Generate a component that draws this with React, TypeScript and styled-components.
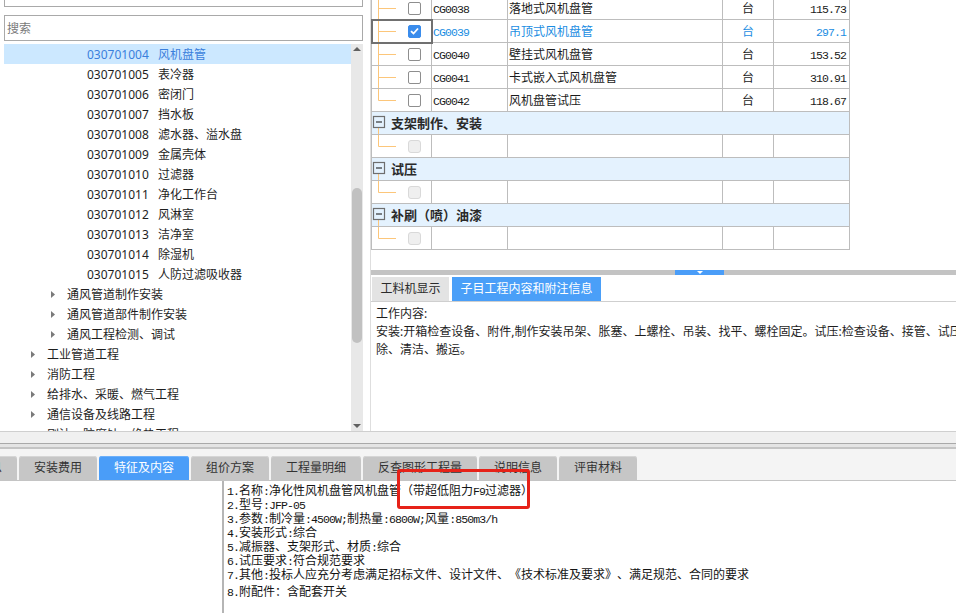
import React from "react";
import styled, { createGlobalStyle } from "styled-components";

const GlobalStyle = createGlobalStyle`
  html, body { margin: 0; padding: 0; background: #ffffff; }
  body {
    font-family: "Noto Sans", "Noto Sans CJK SC", sans-serif;
    font-size: 12px;
    color: #222;
    text-spacing-trim: space-all;
  }
  *, *::before, *::after { box-sizing: border-box; }
`;

const Page = styled.div`
  position: relative;
  width: 956px;
  height: 613px;
  overflow: hidden;
  display: flex;
  flex-direction: column;
  background: #fff;
`;

const TopArea = styled.div`
  display: flex;
  height: 431px;
  flex-shrink: 0;
  overflow: hidden;
`;

/* ---------- left tree pane ---------- */
const LeftPane = styled.aside`
  width: 370px;
  flex-shrink: 0;
  display: flex;
  flex-direction: column;
  padding: 0 7px 0 4px;
`;

const PathBox = styled.div`
  height: 22px;
  margin-top: -15px;
  border: 1px solid #a9a9a9;
  padding: 1px 6px 0;
  line-height: 16px;
  white-space: nowrap;
  overflow: hidden;
  font-size: 12px;
  color: #222;
  flex-shrink: 0;
`;

const SearchInput = styled.input`
  height: 26px;
  margin-top: 8px;
  border: 1px solid #a9a9a9;
  padding: 0 2px;
  font: inherit;
  font-size: 12px;
  color: #222;
  outline: none;
  flex-shrink: 0;
  &::placeholder { color: #7a7a7a; }
`;

const Tree = styled.div`
  margin-top: 3px;
  flex: 1;
  display: flex;
  min-height: 0;
  overflow: hidden;
`;

const TreeList = styled.div`
  flex: 1;
  overflow: hidden;
`;

const TreeRow = styled.div<{ $level: number; $selected?: boolean }>`
  height: 20px;
  display: flex;
  align-items: center;
  white-space: nowrap;
  padding-left: ${(p) => 27 + (p.$level - 2) * 20}px;
  background: ${(p) => (p.$selected ? "#cce8ff" : "transparent")};
  color: ${(p) => (p.$selected ? "#3a7fdc" : "#1e1e1e")};
  font-size: 12px;
`;

const Expander = styled.span`
  width: 16px;
  flex-shrink: 0;
  display: flex;
  align-items: center;
`;

const Code = styled.span`
  width: 71px;
  flex-shrink: 0;
`;

const Scrollbar = styled.div`
  width: 12px;
  flex-shrink: 0;
  background: #e8e8e8;
  display: flex;
  flex-direction: column;
  align-items: center;
`;

const ScrollArrow = styled.div`
  height: 10px;
  width: 100%;
  display: flex;
  align-items: center;
  justify-content: center;
  flex-shrink: 0;
`;

const Thumb = styled.div`
  width: 10px;
  height: 155px;
  margin-top: 134px;
  border-radius: 5px;
  background: #c1c1c1;
  flex-shrink: 0;
`;

const Spacer = styled.div`
  flex: 1;
`;

/* ---------- right pane ---------- */
const RightPane = styled.section`
  flex: 1;
  min-width: 0;
  display: flex;
  flex-direction: column;
  border-left: 1px solid #dedede;
  overflow: hidden;
`;

const TableArea = styled.div`
  height: 270px;
  flex-shrink: 0;
  overflow: hidden;
`;

const Grid = styled.table`
  border-collapse: separate;
  border-spacing: 0;
  table-layout: fixed;
  width: 479px;
  margin-top: -3px;
  border-left: 1px solid #bdbdbd;
`;

const Col = styled.col<{ $w: number }>`
  width: ${(p) => p.$w}px;
`;

const Cell = styled.td<{ $align?: "left" | "center" | "right"; $active?: boolean; $focus?: boolean }>`
  height: 23px;
  padding: 0 ${(p) => (p.$align === "right" ? "3px" : "0")} 0 ${(p) => (p.$align === "left" ? "1px" : "0")};
  border-right: 1px solid #bdbdbd;
  border-bottom: 1px solid #bdbdbd;
  text-align: ${(p) => p.$align || "left"};
  white-space: nowrap;
  overflow: hidden;
  color: ${(p) => (p.$active ? "#1a8de2" : "#1b1b1b")};
  font-size: 12px;
  outline: ${(p) => (p.$focus ? "2px solid #707070" : "none")};
  outline-offset: -1px;
`;

const GroupCell = styled.td`
  height: 23px;
  padding: 0;
  background: #e4f2fe;
  border-right: 1px solid #bdbdbd;
  border-bottom: 1px solid #bdbdbd;
`;

const GroupInner = styled.div`
  height: 22px;
  display: flex;
  align-items: center;
`;

const GroupTitle = styled.span`
  margin-left: 5px;
  margin-top: -2px;
  font-weight: 700;
  font-size: 13px;
  color: #2a2a2a;
`;

const TreeCellInner = styled.div`
  height: 22px;
  display: flex;
  align-items: center;
`;

const Check = styled.span<{ $checked?: boolean; $disabled?: boolean }>`
  width: 13px;
  height: 13px;
  margin-left: 12px;
  flex-shrink: 0;
  border-radius: ${(p) => (p.$disabled ? "3px" : "2px")};
  border: 1px solid ${(p) => (p.$checked ? "#3a8cec" : p.$disabled ? "#d9d9d9" : "#8e8e8e")};
  background: ${(p) => (p.$checked ? "#3a8cec" : p.$disabled ? "#efefef" : "#fff")};
  display: flex;
  align-items: center;
  justify-content: center;
`;

const Ascii = styled.span`
  font-family: "Liberation Mono", monospace;
  font-size: 11.5px;
  letter-spacing: -0.9px;
  line-height: 1;
`;

const HSplitter = styled.div`
  height: 5px;
  flex-shrink: 0;
  background: #c3c3c3;
  display: flex;
  padding-left: 304px;
`;

const SplitHandle = styled.div`
  width: 49px;
  background: #4a9df8;
  display: flex;
  justify-content: center;
  padding-top: 1px;
`;

const InfoTabs = styled.div`
  margin-top: 2px;
  height: 25px;
  flex-shrink: 0;
  display: flex;
  gap: 3px;
  padding-left: 1px;
  border-bottom: 1px solid #cfcfcf;
`;

const InfoTab = styled.div<{ $active?: boolean }>`
  padding: 0 8.5px;
  line-height: 24px;
  font-size: 12px;
  background: ${(p) => (p.$active ? "#4a9ff8" : "#e3e3e3")};
  color: ${(p) => (p.$active ? "#ffffff" : "#2b2b2b")};
`;

const WorkContent = styled.div`
  padding: 3px 0 0 5px;
  line-height: 18px;
  font-size: 12px;
  color: #1e1e1e;
  white-space: nowrap;
`;

/* ---------- middle strips ---------- */
const StatusStrip = styled.div`
  height: 12px;
  flex-shrink: 0;
  background: #f0f0f0;
  border-top: 1px solid #cfcfcf;
`;

const Splitter = styled.div`
  height: 6px;
  flex-shrink: 0;
  background: #e4e4e4;
  border-top: 1px solid #a9a9a9;
  border-bottom: 2px solid #c4c4c4;
`;

/* ---------- bottom tabs ---------- */
const TabStrip = styled.div`
  height: 32px;
  flex-shrink: 0;
  background: #f4f4f4;
  padding-top: 7px;
  border-bottom: 1px solid #c4c4c4;
  overflow: hidden;
`;

const TabRow = styled.div`
  display: flex;
  gap: 2px;
  height: 24px;
  margin-left: -61px;
`;

const Tab = styled.div<{ $active?: boolean }>`
  padding: 0 15px;
  line-height: 24px;
  font-size: 12px;
  white-space: nowrap;
  border-radius: 3px 3px 0 0;
  background: ${(p) => (p.$active ? "#4a9df8" : "#c6c6c6")};
  color: ${(p) => (p.$active ? "#ffffff" : "#333333")};
  box-shadow: inset 0 1px 0 ${(p) => (p.$active ? "#6db0fa" : "#d6d6d6")};
`;

const BottomArea = styled.div`
  flex: 1;
  display: flex;
  min-height: 0;
`;

const BlankPanel = styled.div`
  width: 222px;
  flex-shrink: 0;
`;

const FeaturePane = styled.div`
  flex: 1;
  border-left: 2px solid #b5b5b5;
  padding: 3px 0 0 3px;
  font-size: 12px;
  line-height: 14px;
  color: #141414;
  white-space: nowrap;
`;

const FeatureLine = styled.div<{ $gap?: boolean }>`
  height: 14px;
  margin-top: ${(p) => (p.$gap ? "3px" : "0")};
`;

const Annotation = styled.div`
  position: absolute;
  left: 397px;
  top: 469px;
  width: 133px;
  height: 40px;
  border: 3px solid #e62218;
  border-radius: 3px;
  pointer-events: none;
`;

/* ---------- helpers ---------- */
function Mixed({ text }: { text: string }) {
  const parts = text.split(/([\x20-\x7e]+)/);
  return (
    <>
      {parts.map((p, i) => (i % 2 === 1 ? <Ascii key={i}>{p}</Ascii> : <React.Fragment key={i}>{p}</React.Fragment>))}
    </>
  );
}

const RightTri = () => (
  <svg width="4" height="7" viewBox="0 0 4 7">
    <polygon points="0,0 4,3.5 0,7" fill="#7a7a7a" />
  </svg>
);

const Connector = ({ last }: { last?: boolean }) => (
  <svg width="24" height="22" viewBox="0 0 24 22" style={{ flexShrink: 0 }}>
    <line x1="6.5" y1="0" x2="6.5" y2={last ? 11.5 : 22} stroke="#fcc67a" strokeWidth="1" />
    <line x1="6.5" y1="11.5" x2="24" y2="11.5" stroke="#fcc67a" strokeWidth="1" />
  </svg>
);

const GroupToggle = () => (
  <svg width="14" height="22" viewBox="0 0 14 22" style={{ flexShrink: 0 }}>
    <line x1="6.5" y1="16" x2="6.5" y2="22" stroke="#fcc67a" strokeWidth="1" />
    <rect x="1.5" y="4.5" width="11" height="11" fill="none" stroke="#6e6e6e" strokeWidth="1.2" />
    <line x1="4" y1="10" x2="10" y2="10" stroke="#333" strokeWidth="1.2" />
  </svg>
);

const CheckMark = () => (
  <svg width="9" height="8" viewBox="0 0 9 8">
    <polyline points="1,4.2 3.5,6.5 8,1.5" fill="none" stroke="#fff" strokeWidth="1.8" />
  </svg>
);

const leaves: [string, string][] = [
  ["030701004", "风机盘管"],
  ["030701005", "表冷器"],
  ["030701006", "密闭门"],
  ["030701007", "挡水板"],
  ["030701008", "滤水器、溢水盘"],
  ["030701009", "金属壳体"],
  ["030701010", "过滤器"],
  ["030701011", "净化工作台"],
  ["030701012", "风淋室"],
  ["030701013", "洁净室"],
  ["030701014", "除湿机"],
  ["030701015", "人防过滤吸收器"],
];

const branches: [number, string][] = [
  [3, "通风管道制作安装"],
  [3, "通风管道部件制作安装"],
  [3, "通风工程检测、调试"],
  [2, "工业管道工程"],
  [2, "消防工程"],
  [2, "给排水、采暖、燃气工程"],
  [2, "通信设备及线路工程"],
  [2, "刷油、防腐蚀、绝热工程"],
];

const items = [
  { code: "CG0038", name: "落地式风机盘管", unit: "台", price: "115.73" },
  { code: "CG0039", name: "吊顶式风机盘管", unit: "台", price: "297.1", checked: true },
  { code: "CG0040", name: "壁挂式风机盘管", unit: "台", price: "153.52" },
  { code: "CG0041", name: "卡式嵌入式风机盘管", unit: "台", price: "310.91" },
  { code: "CG0042", name: "风机盘管试压", unit: "台", price: "118.67" },
];

const groups = ["支架制作、安装", "试压", "补刷（喷）油漆"];

const bottomTabs = ["换算信息", "安装费用", "特征及内容", "组价方案", "工程量明细", "反查图形工程量", "说明信息", "评审材料"];

const features = [
  "1.名称:净化性风机盘管风机盘管（带超低阻力F9过滤器）",
  "2.型号:JFP-05",
  "3.参数:制冷量:4500W;制热量:6800W;风量:850m3/h",
  "4.安装形式:综合",
  "5.减振器、支架形式、材质:综合",
  "6.试压要求:符合规范要求",
  "7.其他:投标人应充分考虑满足招标文件、设计文件、《技术标准及要求》、满足规范、合同的要求",
];

export default function App() {
  return (
    <Page>
      <GlobalStyle />
      <TopArea>
        <LeftPane>
          <PathBox>阿 清单 通风空调工程</PathBox>
          <SearchInput placeholder="搜索" />
          <Tree>
            <TreeList>
              {leaves.map(([code, name], i) => (
                <TreeRow key={code} $level={4} $selected={i === 0}>
                  <Expander />
                  <Code>{code}</Code>
                  <span>{name}</span>
                </TreeRow>
              ))}
              {branches.map(([level, name]) => (
                <TreeRow key={name} $level={level}>
                  <Expander>
                    <RightTri />
                  </Expander>
                  <span>{name}</span>
                </TreeRow>
              ))}
            </TreeList>
            <Scrollbar>
              <ScrollArrow>
                <svg width="8" height="4" viewBox="0 0 8 4">
                  <polygon points="0,4 4,0 8,4" fill="#606060" />
                </svg>
              </ScrollArrow>
              <Thumb />
              <Spacer />
              <ScrollArrow>
                <svg width="8" height="4" viewBox="0 0 8 4">
                  <polygon points="0,0 8,0 4,4" fill="#606060" />
                </svg>
              </ScrollArrow>
            </Scrollbar>
          </Tree>
        </LeftPane>

        <RightPane>
          <TableArea>
            <Grid>
              <colgroup>
                <Col $w={60} />
                <Col $w={76} />
                <Col $w={215} />
                <Col $w={51} />
                <Col $w={76} />
              </colgroup>
              <tbody>
                {items.map((it, i) => (
                  <tr key={it.code}>
                    <Cell $focus={it.checked}>
                      <TreeCellInner>
                        <Connector last={i === items.length - 1} />
                        <Check $checked={it.checked}>{it.checked && <CheckMark />}</Check>
                      </TreeCellInner>
                    </Cell>
                    <Cell $align="left" $active={it.checked}>
                      <Mixed text={it.code} />
                    </Cell>
                    <Cell $align="left" $active={it.checked}>
                      {it.name}
                    </Cell>
                    <Cell $align="center" $active={it.checked}>
                      {it.unit}
                    </Cell>
                    <Cell $align="right" $active={it.checked}>
                      <Mixed text={it.price} />
                    </Cell>
                  </tr>
                ))}
                {groups.map((g) => (
                  <React.Fragment key={g}>
                    <tr>
                      <GroupCell colSpan={5}>
                        <GroupInner>
                          <GroupToggle />
                          <GroupTitle>{g}</GroupTitle>
                        </GroupInner>
                      </GroupCell>
                    </tr>
                    <tr>
                      <Cell>
                        <TreeCellInner>
                          <Connector last />
                          <Check $disabled />
                        </TreeCellInner>
                      </Cell>
                      <Cell />
                      <Cell />
                      <Cell />
                      <Cell />
                    </tr>
                  </React.Fragment>
                ))}
              </tbody>
            </Grid>
          </TableArea>
          <HSplitter>
            <SplitHandle>
              <svg width="6" height="3" viewBox="0 0 6 3">
                <polygon points="0,0 6,0 3,3" fill="#ffffff" />
              </svg>
            </SplitHandle>
          </HSplitter>
          <InfoTabs>
            <InfoTab>工料机显示</InfoTab>
            <InfoTab $active>子目工程内容和附注信息</InfoTab>
          </InfoTabs>
          <WorkContent>
            <div>工作内容:</div>
            <div>安装:开箱检查设备、附件,制作安装吊架、胀塞、上螺栓、吊装、找平、螺栓固定。试压:检查设备、接管、试压、拆</div>
            <div>除、清洁、搬运。</div>
          </WorkContent>
        </RightPane>
      </TopArea>

      <StatusStrip />
      <Splitter />

      <TabStrip>
        <TabRow>
          {bottomTabs.map((t) => (
            <Tab key={t} $active={t === "特征及内容"}>
              {t}
            </Tab>
          ))}
        </TabRow>
      </TabStrip>

      <BottomArea>
        <BlankPanel />
        <FeaturePane>
          {features.map((f) => (
            <FeatureLine key={f}>
              <Mixed text={f} />
            </FeatureLine>
          ))}
          <FeatureLine $gap>
            <Mixed text="8.附配件：含配套开关" />
          </FeatureLine>
        </FeaturePane>
      </BottomArea>

      <Annotation />
    </Page>
  );
}
